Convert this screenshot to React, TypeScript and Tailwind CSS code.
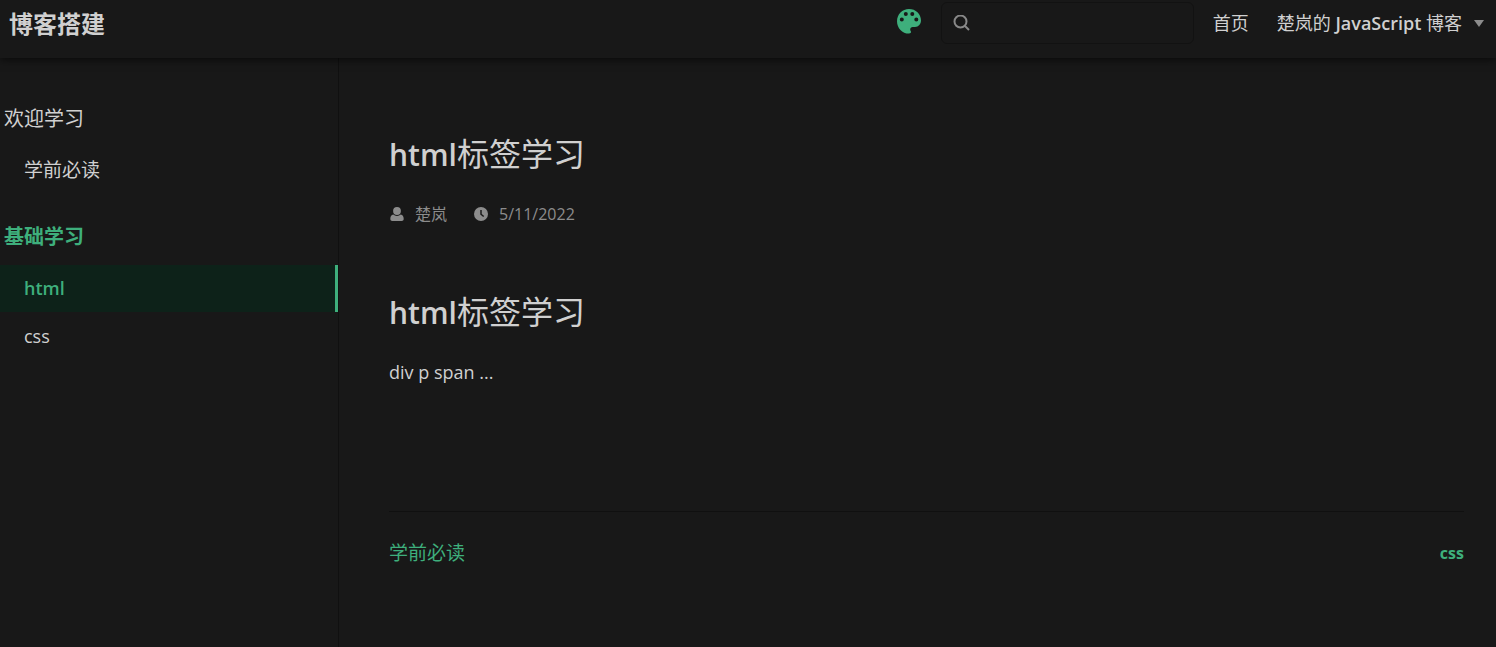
import type { ReactNode } from "react";

function PaletteIcon() {
  return (
    <svg viewBox="0 0 24 25" className="h-[25px] w-6" fill="#3eaf7c" aria-hidden="true">
      <path
        fillRule="evenodd"
        d="M12 0C5.2 0 0 5.400 0 12.200C0 19 5.200 24.600 12 24.600C13.500 24.600 14.200 23.700 14 22.600C13.800 21.900 13.200 21.500 13.200 20.400C13.200 19 14.200 18 15.700 18H18C21.600 18 24 15.200 24 11.600C24 4.800 18.700 0 12 0ZM4.800 8.500a2 2 0 1 1 0 4a2 2 0 0 1 0-4ZM8.800 3a2 2 0 1 1 0 4a2 2 0 0 1 0-4ZM15.300 3a2 2 0 1 1 0 4a2 2 0 0 1 0-4ZM19.300 8.500a2 2 0 1 1 0 4a2 2 0 0 1 0-4Z"
      />
    </svg>
  );
}

function SearchIcon() {
  return (
    <svg viewBox="0 0 17 17" className="h-[17px] w-[17px]" fill="none" stroke="#888888" strokeWidth="2" aria-hidden="true">
      <circle cx="7.500" cy="6.500" r="6" />
      <path d="M12 11l4 4" />
    </svg>
  );
}

function UserIcon() {
  return (
    <svg viewBox="0 0 14 15" className="h-[15px] w-4" fill="#8c8c8c" aria-hidden="true">
      <circle cx="7" cy="4" r="3.900" />
      <path d="M3.300 7.600C4.300 8.500 5.500 9 7 9s2.700-.5 3.700-1.400C12.800 8.200 13.700 9.700 13.700 12c0 1.300-.8 2-2 2H2.300c-1.200 0-2-.7-2-2C.3 9.700 1.200 8.200 3.300 7.600Z" />
    </svg>
  );
}

function ClockIcon() {
  return (
    <svg viewBox="0 0 14 14" className="h-[14px] w-[14px]" aria-hidden="true">
      <circle cx="7" cy="7" r="7" fill="#8c8c8c" />
      <path d="M7 3v4.200l2.700 2.300" fill="none" stroke="#181818" strokeWidth="1.500" />
    </svg>
  );
}

function Heading({ className, children }: { className: string; children?: ReactNode }) {
  return (
    <h1 className={`text-[32px] leading-10 font-normal text-[#d0d0d0] ${className}`}>
      <span className="text-[30px] font-semibold">html</span>标签学习
      {children}
    </h1>
  );
}

export default function App() {
  return (
    <div className="flex min-h-screen flex-col bg-[#181818] font-['Open_Sans','Noto_Sans_CJK_SC',sans-serif] text-[#d0d0d0]">
      <header className="relative flex h-[58px] items-start justify-between pr-3 pl-[9px] shadow-[0_2px_8px_0_rgba(0,0,0,0.6)]">
        <a href="#home" className="pt-1 text-2xl leading-10 font-bold">博客搭建</a>
        <div className="flex h-[46px] items-center">
          <button type="button" aria-label="Theme" className="mr-5 pb-1">
            <PaletteIcon />
          </button>
          <label className="flex h-[42px] w-[253px] items-center gap-2 rounded-md border border-[#121212] px-[11px]">
            <SearchIcon />
            <input type="search" aria-label="Search" className="min-w-0 flex-1 bg-transparent text-base outline-none" />
          </label>
          <nav className="ml-[19px] flex items-center gap-7 text-lg">
            <a href="#index">首页</a>
            <button type="button" className="flex items-center gap-3">
              <span>楚岚的 <span className="font-semibold">JavaScript</span> 博客</span>
              <svg viewBox="0 0 10 7" className="h-[7px] w-[10px]" fill="#8c8c8c" aria-hidden="true">
                <path d="M0 0h10L5 7z" />
              </svg>
            </button>
          </nav>
        </div>
      </header>
      <div className="flex flex-1">
        <aside className="w-[339px] shrink-0 border-r border-[#101010] pt-[43px]">
          <section>
            <h2 className="pl-1 text-xl leading-9">欢迎学习</h2>
            <ul className="pt-[10px] text-[19px]">
              <li><a href="#read" className="block pl-6 leading-[47px]">学前必读</a></li>
            </ul>
          </section>
          <section className="pt-[25px]">
            <h2 className="pl-1 text-xl leading-9 font-bold text-[#3eaf7c]">基础学习</h2>
            <ul className="pt-[10px] text-lg">
              <li><a href="#html" className="block border-r-[3px] border-[#3eaf7c] bg-[#0d2219] pl-6 leading-[47px] font-semibold text-[#3eaf7c]">html</a></li>
              <li><a href="#css" className="block pl-6 leading-[48px]">css</a></li>
            </ul>
          </section>
        </aside>
        <main className="min-w-0 flex-1 pr-8 pl-[50px]">
          <Heading className="pt-[76px]" />
          <div className="flex items-center pt-[27px] text-base leading-6 text-[#8c8c8c]">
            <span className="flex items-center gap-[10px]"><UserIcon />楚岚</span>
            <span className="ml-[27px] flex items-center gap-[11px]"><ClockIcon /><time dateTime="2022-05-11">5/11/2022</time></span>
          </div>
          <Heading className="pt-[66px]" />
          <p className="pt-[23px] text-lg leading-8">div p span ...</p>
          <footer className="mt-[123px] flex items-center justify-between border-t border-[#101010] pt-[23px] text-[#3eaf7c]">
            <a href="#read" className="text-[19px] leading-9">学前必读</a>
            <a href="#css" className="text-base leading-9 font-bold">css</a>
          </footer>
        </main>
      </div>
    </div>
  );
}
